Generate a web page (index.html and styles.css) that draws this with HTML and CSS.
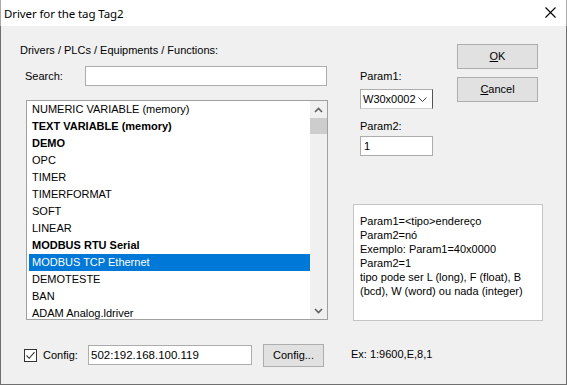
FILE: index.html
```html
<!DOCTYPE html>
<html>
<head>
<meta charset="utf-8">
<link rel="stylesheet" href="styles.css">
</head>
<body>
<div class="dialog">
  <div class="titlebar">
    <span class="title">Driver for the tag Tag2</span>
    <svg class="close" width="11" height="11" viewBox="0 0 11 11"><path d="M0.5 0.5 L10.5 10.5 M10.5 0.5 L0.5 10.5" stroke="#000" stroke-width="1.1" fill="none"/></svg>
  </div>
  <div class="content">
    <div class="left">
      <div class="heading">Drivers / PLCs / Equipments / Functions:</div>
      <div class="search-row">
        <span class="search-label">Search:</span>
        <div class="edit search-edit"></div>
      </div>
      <div class="listbox">
        <ul class="items">
          <li>NUMERIC VARIABLE (memory)</li>
          <li class="bold">TEXT VARIABLE (memory)</li>
          <li class="bold">DEMO</li>
          <li>OPC</li>
          <li>TIMER</li>
          <li>TIMERFORMAT</li>
          <li>SOFT</li>
          <li>LINEAR</li>
          <li class="bold">MODBUS RTU Serial</li>
          <li class="selected">MODBUS TCP Ethernet</li>
          <li>DEMOTESTE</li>
          <li>BAN</li>
          <li>ADAM Analog.ldriver</li>
        </ul>
        <div class="scrollbar">
          <div class="sb-btn"><svg width="9" height="6" viewBox="0 0 9 6"><path d="M1 5 L4.5 1.5 L8 5" stroke="#606060" stroke-width="1.6" fill="none"/></svg></div>
          <div class="sb-thumb"></div>
          <div class="sb-track"></div>
          <div class="sb-btn"><svg width="9" height="6" viewBox="0 0 9 6"><path d="M1 1 L4.5 4.5 L8 1" stroke="#606060" stroke-width="1.6" fill="none"/></svg></div>
        </div>
      </div>
      <div class="config-row">
        <span class="checkbox"><svg width="11" height="11" viewBox="0 0 11 11"><path d="M1.5 5.5 L4.2 8.3 L9.5 2.2" stroke="#333" stroke-width="1.1" fill="none"/></svg></span>
        <span class="config-label">Config:</span>
        <div class="edit config-edit">502:192.168.100.119</div>
        <div class="button config-btn">Config...</div>
      </div>
    </div>
    <div class="right">
      <div class="top-row">
        <div class="params">
          <div class="plabel">Param1:</div>
          <div class="combo"><span>W30x0002</span><svg width="9" height="5" viewBox="0 0 9 5"><path d="M0.5 0.5 L4.5 4.5 L8.5 0.5" stroke="#444" stroke-width="1" fill="none"/></svg></div>
          <div class="plabel p2">Param2:</div>
          <div class="edit param-edit">1</div>
        </div>
        <div class="buttons">
          <div class="button main-btn"><u>O</u>K</div>
          <div class="button main-btn"><u>C</u>ancel</div>
        </div>
      </div>
      <div class="desc">Param1=&lt;tipo&gt;endereço<br>Param2=nó<br>Exemplo: Param1=40x0000<br>Param2=1<br>tipo pode ser L (long), F (float), B (bcd), W (word) ou nada (integer)</div>
      <div class="example">Ex: 1:9600,E,8,1</div>
    </div>
  </div>
</div>
</body>
</html>
```
FILE: styles.css
```css
* { box-sizing: border-box; }
html, body { margin: 0; padding: 0; }
body {
  width: 567px;
  height: 385px;
  overflow: hidden;
  font-family: "Liberation Sans", Arial, sans-serif;
  font-size: 11px;
  color: #000;
}
.dialog {
  width: 567px;
  height: 385px;
  background: #f0f0f0;
  border: 1px solid #6f6f6f;
  border-top: none;
  display: flex;
  flex-direction: column;
}
.titlebar {
  height: 26px;
  background: #fff;
  display: flex;
  align-items: center;
  justify-content: space-between;
  padding: 0 10px 0 3px;
  margin: 0 -1px;
  border-left: 1px solid #aaa;
  border-right: 1px solid #aaa;
}
.title {
  font-family: "Noto Sans", sans-serif;
  font-size: 11.5px;
  letter-spacing: -0.1px;
}
.close { margin-top: -1px; }
.content {
  display: flex;
  flex: 1;
  line-height: 13px;
}
.left {
  width: 307px;
  margin-left: 19px;
  display: flex;
  flex-direction: column;
}
.heading { margin-top: 18px; }
.search-row {
  display: flex;
  align-items: center;
  margin-top: 9px;
}
.search-label { width: 65px; padding-left: 5px; }
.edit {
  background: #fff;
  border: 1px solid #acacac;
  height: 20px;
  display: flex;
  align-items: center;
  padding-left: 3px;
}
.search-edit { width: 242px; }
.listbox {
  margin-top: 14px;
  margin-left: 6px;
  width: 302px;
  height: 220px;
  border: 1px solid #a0a0a0;
  background: #fff;
  display: flex;
  overflow: hidden;
}
.items {
  list-style: none;
  margin: 0;
  padding: 0 0 0 2px;
  flex: 1;
}
.items li {
  height: 17px;
  line-height: 17px;
  padding-left: 3px;
  white-space: nowrap;
}
.items li.bold { font-weight: bold; }
.items li.selected { background: #0078d7; color: #fff; }
.scrollbar {
  width: 17px;
  background: #f0f0f0;
  display: flex;
  flex-direction: column;
}
.sb-btn {
  height: 17px;
  display: flex;
  align-items: center;
  justify-content: center;
}
.sb-thumb { height: 16px; background: #cdcdcd; }
.sb-track { flex: 1; }
.config-row {
  display: flex;
  align-items: center;
  margin-top: 24px;
  height: 22px;
}
.checkbox {
  width: 13px;
  height: 13px;
  border: 1px solid #333;
  background: #fff;
  margin-left: 4px;
  display: flex;
  align-items: center;
  justify-content: center;
}
.config-label { margin-left: 6px; width: 45px; }
.config-edit { width: 164px; height: 20px; padding-left: 2px; font-size: 11.5px; }
.button {
  background: #e1e1e1;
  border: 1px solid #adadad;
  display: flex;
  align-items: center;
  justify-content: center;
}
.config-btn { width: 61px; height: 23px; margin-left: 11px; }
.right {
  margin-left: 26px;
  display: flex;
  flex-direction: column;
}
.top-row { display: flex; }
.params {
  width: 80px;
  padding-left: 7px;
  margin-top: 44px;
  display: flex;
  flex-direction: column;
}
.plabel { height: 13px; }
.combo {
  margin-top: 6px;
  width: 73px;
  height: 20px;
  background: #fff;
  border: 1px solid #adadad;
  border-right-color: #555;
  border-bottom-color: #cfcfcf;
  display: flex;
  align-items: center;
  justify-content: space-between;
  padding: 0 5px 0 2px;
  font-size: 11px;
}
.p2 { margin-top: 11px; }
.param-edit { margin-top: 3px; width: 73px; }
.buttons {
  margin-left: 24px;
  margin-top: 18px;
  display: flex;
  flex-direction: column;
  gap: 8px;
}
.main-btn { width: 81px; height: 25px; }
.desc {
  margin-top: 48px;
  width: 190px;
  height: 117px;
  background: #fff;
  border: 1px solid #c4c4c4;
  padding: 9px 6px 0 6px;
  line-height: 14px;
}
.example { margin-top: 27px; margin-left: -2px; }
```
